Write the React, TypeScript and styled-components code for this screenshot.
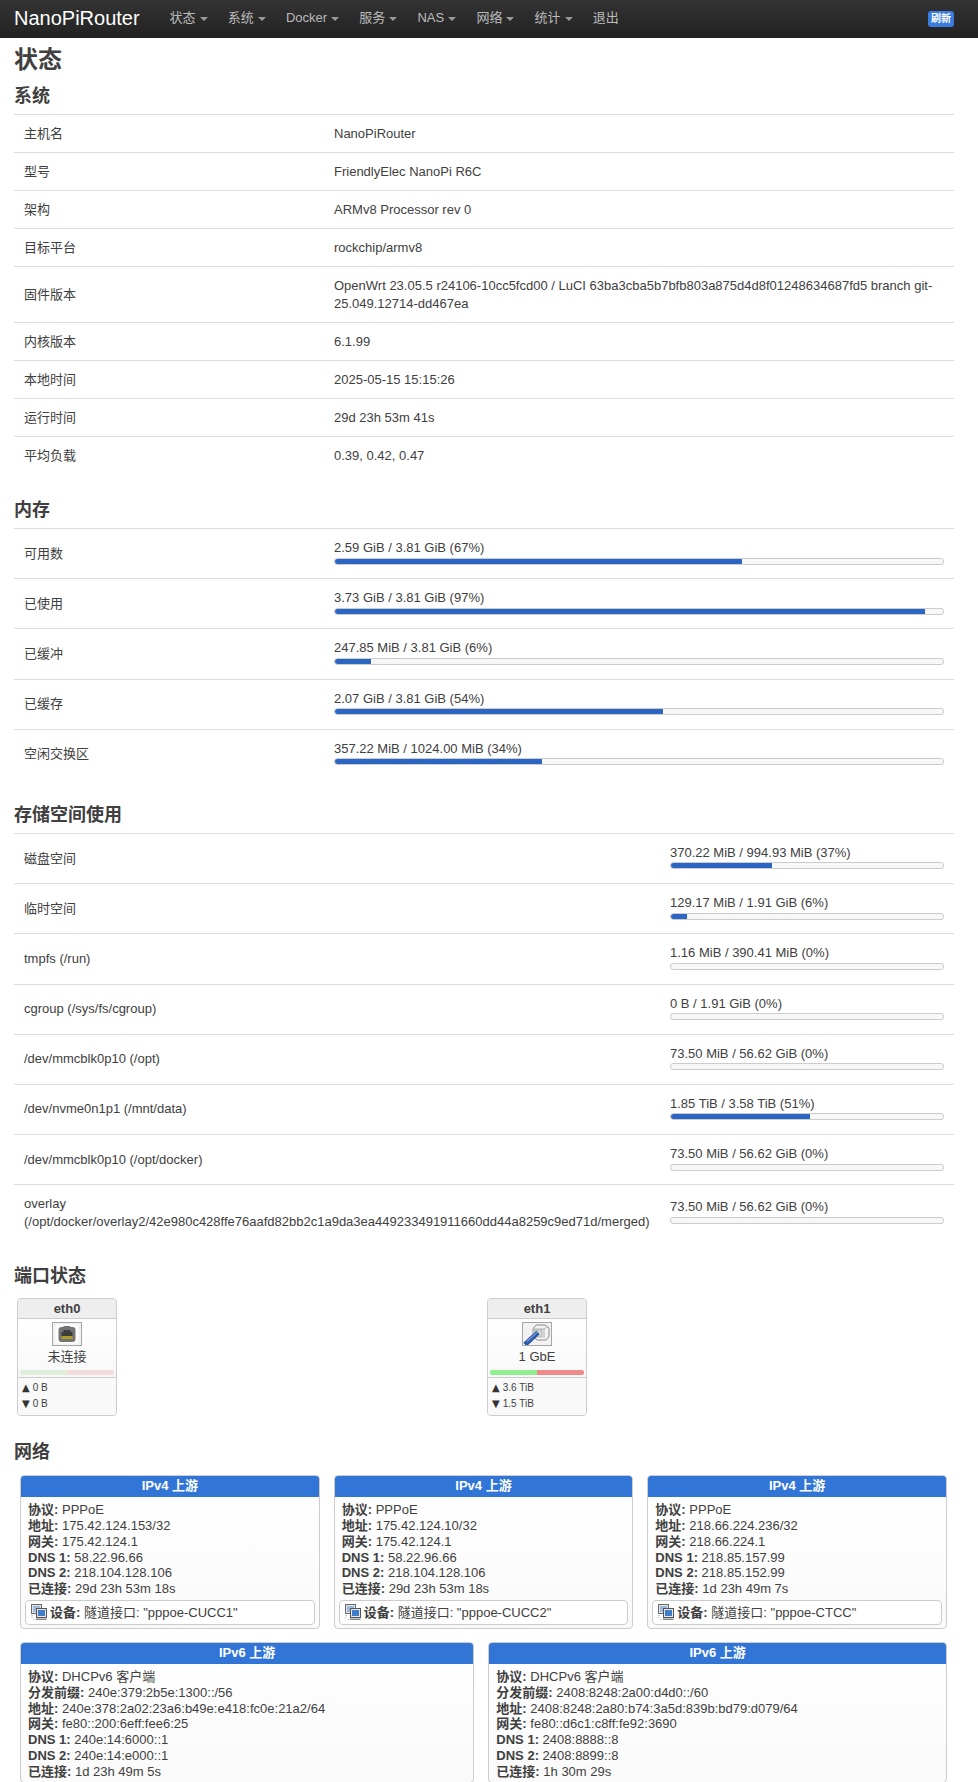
import React from 'react';
import styled, { createGlobalStyle } from 'styled-components';

const Global = createGlobalStyle`
  html, body { margin: 0; padding: 0; height: 1782px; overflow: hidden; background: #fff; }
  body { font-family: "Liberation Sans", "Noto Sans CJK SC", Arial, sans-serif; font-size: 13px; line-height: 18px; color: #404040; }
  * { box-sizing: border-box; }
`;

const NavBar = styled.header`
  height: 38px; display: flex; align-items: center; padding: 0 24px 2px 14px;
  background: linear-gradient(#333333, #222222);
`;
const Brand = styled.a`
  font-size: 20px; line-height: 32px; color: #fff; width: 155.5px; flex: none;
`;
const Menu = styled.nav`
  display: flex; flex: 1; gap: 20.2px; align-items: center;
`;
const MenuItem = styled.span`
  color: #bbb; font-size: 13px; display: inline-flex; align-items: center; gap: 4px;
`;
const Caret = styled.i`
  width: 0; height: 0; border-left: 4px solid transparent; border-right: 4px solid transparent;
  border-top: 4px solid #999; margin-top: 2px;
`;
const Badge = styled.span`
  background: #3a7dde; color: #fff; font-size: 10px; font-weight: bold; line-height: 14px;
  border-radius: 3px; padding: 1px 2px; width: 26px; text-align: center; white-space: nowrap; margin-top: 2px;
`;

const Main = styled.main`
  padding: 0 24px 0 14px;
`;
const PageTitle = styled.h1`
  font-size: 24px; line-height: 36px; margin: 4px 0 0; font-weight: bold; color: #404040;
`;
const SectionTitle = styled.h2`
  font-size: 18px; line-height: 36px; margin: 0; font-weight: bold; color: #404040;
`;
const Section = styled.section`
  margin-bottom: 18px;
`;
const Table = styled.div`
  display: flex; flex-direction: column;
`;
const Row = styled.div`
  display: flex; align-items: center; border-top: 1px solid #ddd;
`;
const Label = styled.div<{ $w: number }>`
  width: ${p => p.$w}px; flex: none; padding: 9.5px 10px;
`;
const Value = styled.div`
  flex: 1; min-width: 0; padding: 9.5px 10px;
`;
const MeterCell = styled.div`
  flex: 1; min-width: 0; padding: 10px 10px 13.7px;
`;
const MeterText = styled.div`
  line-height: 18px; height: 18px;
`;
const MeterTrack = styled.div`
  height: 7px; border: 1px solid #ccc; border-radius: 3px; background: #f7f7f7; overflow: hidden; margin-top: 0.5px;
`;
const MeterFill = styled.div`
  height: 100%; background: #2c66c3; border-radius: 2px 0 0 2px;
`;

const Ports = styled.div`
  display: grid; grid-template-columns: 470px 470px; margin-top: 4px;
`;
const PortSlot = styled.div`
  padding-left: 3px;
`;
const PortCard = styled.div`
  width: 100px; height: 118px; border: 1px solid #ccc; border-radius: 4px; background: #fff; overflow: hidden;
  display: flex; flex-direction: column;
`;
const PortName = styled.div`
  height: 20px; background: #eee; border-bottom: 1px solid #ccc; text-align: center; font-weight: bold; font-size: 13px; line-height: 19px; flex: none;
`;
const PortBody = styled.div`
  display: flex; flex-direction: column; align-items: center; height: 58px; flex: none;
  background: linear-gradient(#fff, #f8f8f8); padding-top: 3px;
`;
const PortIcon = styled.div`
  width: 30px; height: 24px; border: 1px solid #a5a5a5; background: #f2f2f2; display: flex; align-items: center; justify-content: center; flex: none;
`;
const PortState = styled.div`
  margin-top: 2px; font-size: 13px; line-height: 18px; text-align: center; height: 18px;
`;
const LinkBar = styled.div`
  display: flex; width: 94px; height: 5px; margin-top: 4px; border-radius: 2px; overflow: hidden; flex: none;
`;
const LinkSeg = styled.div<{ $c: string }>`
  flex: 1; background: ${p => p.$c};
`;
const PortStats = styled.div`
  border-top: 1px solid #ccc; background: #f9f9f9; flex: 1; padding: 2px 4px; font-size: 10px; line-height: 16px;
`;
const Arrow = styled.span`
  font-family: "DejaVu Sans", sans-serif; font-size: 10px; color: #333; margin-right: 3px;
`;

const Cards = styled.div`
  display: flex; gap: 14px; padding: 0 7px 0 6px; margin-bottom: 13.5px;
  &:first-of-type { margin-top: 5px; }
`;
const NetCard = styled.div<{ $auto?: boolean }>`
  flex: ${p => (p.$auto ? '1 1 auto' : '1 1 0')}; min-width: 0; border: 1px solid #ccc; border-radius: 4px; overflow: hidden; background: linear-gradient(#fff, #fafafa);
`;
const NetHead = styled.div`
  background: #3176d6; color: #fff; text-align: center; font-weight: bold; font-size: 13px; line-height: 20px; height: 21px;
`;
const NetBody = styled.div`
  padding: 5px 7px 2.5px;
`;
const NetLine = styled.div`
  line-height: 15.8px; font-size: 13px; white-space: nowrap;
`;
const Key = styled.strong`
  font-weight: bold;
`;
const DeviceBox = styled.div`
  display: flex; align-items: center; gap: 3px; margin: 3px -3px 0; height: 25px; border: 1px solid #ccc; border-radius: 4px; padding: 0 5px; font-size: 13px; background: #fff;
`;

const RjEmpty = () => (
  <svg width="24" height="20" viewBox="0 0 24 20">
    <rect x="0.5" y="0.5" width="23" height="19" rx="3" fill="#fff" />
    <path d="M3.5 6a3 3 0 0 1 3-3h2V2h7v1h2a3 3 0 0 1 3 3v9a3 3 0 0 1-3 3h-11a3 3 0 0 1-3-3z" fill="#747474" />
    <path d="M6.5 8h2V6h7v2h2v6h-11z" fill="#3c3c3c" />
    <rect x="6.5" y="12" width="11" height="3" fill="#c7b22c" />
    <path d="M8 12v3M10 12v3M12 12v3M14 12v3M16 12v3" stroke="#6f6a20" strokeWidth="0.6" />
  </svg>
);
const RjPlugged = () => (
  <svg width="28" height="22" viewBox="0 0 28 22">
    <path d="M10 6l3-4h9l4 3v8l-3 4H14l-3-3z" fill="#f4f4f4" stroke="#8c8c8c" />
    <path d="M13 2l-3 4h11l4-3M21 6v9" fill="none" stroke="#b0b0b0" />
    <path d="M10 7h9v7h-9z" fill="#dcdcdc" stroke="#999" strokeWidth="0.7" />
    <path d="M2 21.5L15 9.5" stroke="#2b5aa6" strokeWidth="5" />
    <path d="M4 18.5L14 9.5" stroke="#7d9ed6" strokeWidth="1.2" />
  </svg>
);
const TunnelIcon = () => (
  <svg width="16" height="17" viewBox="0 0 16 17">
    <rect x="0.5" y="0.5" width="10" height="9" fill="#e3e3e3" stroke="#6a6a6a" />
    <rect x="2" y="2" width="7" height="6" fill="#9fb9de" />
    <rect x="5.5" y="4.5" width="10" height="9" fill="#e6e6e6" stroke="#555" />
    <rect x="7" y="6" width="7" height="6" fill="#3f7cc9" />
    <path d="M5 14.5h10.5V16H5z" fill="#888" />
    <path d="M0.5 11h1v1h-1zM0.5 13h1v1h-1zM2.5 15h1v1h-1z" fill="#7aa0d8" />
  </svg>
);

const Meter = ({ text, pct }: { text: string; pct: number }) => (
  <MeterCell>
    <MeterText>{text}</MeterText>
    <MeterTrack><MeterFill style={{ width: `${pct}%` }} /></MeterTrack>
  </MeterCell>
);

const system: [string, string][] = [
  ['主机名', 'NanoPiRouter'],
  ['型号', 'FriendlyElec NanoPi R6C'],
  ['架构', 'ARMv8 Processor rev 0'],
  ['目标平台', 'rockchip/armv8'],
  ['固件版本', 'OpenWrt 23.05.5 r24106-10cc5fcd00 / LuCI 63ba3cba5b7bfb803a875d4d8f01248634687fd5 branch git-25.049.12714-dd467ea'],
  ['内核版本', '6.1.99'],
  ['本地时间', '2025-05-15 15:15:26'],
  ['运行时间', '29d 23h 53m 41s'],
  ['平均负载', '0.39, 0.42, 0.47'],
];
const memory: [string, string, number][] = [
  ['可用数', '2.59 GiB / 3.81 GiB (67%)', 67],
  ['已使用', '3.73 GiB / 3.81 GiB (97%)', 97],
  ['已缓冲', '247.85 MiB / 3.81 GiB (6%)', 6],
  ['已缓存', '2.07 GiB / 3.81 GiB (54%)', 54],
  ['空闲交换区', '357.22 MiB / 1024.00 MiB (34%)', 34],
];
const storage: [string, string, number][] = [
  ['磁盘空间', '370.22 MiB / 994.93 MiB (37%)', 37],
  ['临时空间', '129.17 MiB / 1.91 GiB (6%)', 6],
  ['tmpfs (/run)', '1.16 MiB / 390.41 MiB (0%)', 0],
  ['cgroup (/sys/fs/cgroup)', '0 B / 1.91 GiB (0%)', 0],
  ['/dev/mmcblk0p10 (/opt)', '73.50 MiB / 56.62 GiB (0%)', 0],
  ['/dev/nvme0n1p1 (/mnt/data)', '1.85 TiB / 3.58 TiB (51%)', 51],
  ['/dev/mmcblk0p10 (/opt/docker)', '73.50 MiB / 56.62 GiB (0%)', 0],
  ['overlay (/opt/docker/overlay2/42e980c428ffe76aafd82bb2c1a9da3ea449233491911660dd44a8259c9ed71d/merged)', '73.50 MiB / 56.62 GiB (0%)', 0],
];
const ipv4 = [
  { rows: [['协议', 'PPPoE'], ['地址', '175.42.124.153/32'], ['网关', '175.42.124.1'], ['DNS 1', '58.22.96.66'], ['DNS 2', '218.104.128.106'], ['已连接', '29d 23h 53m 18s']], dev: 'pppoe-CUCC1' },
  { rows: [['协议', 'PPPoE'], ['地址', '175.42.124.10/32'], ['网关', '175.42.124.1'], ['DNS 1', '58.22.96.66'], ['DNS 2', '218.104.128.106'], ['已连接', '29d 23h 53m 18s']], dev: 'pppoe-CUCC2' },
  { rows: [['协议', 'PPPoE'], ['地址', '218.66.224.236/32'], ['网关', '218.66.224.1'], ['DNS 1', '218.85.157.99'], ['DNS 2', '218.85.152.99'], ['已连接', '1d 23h 49m 7s']], dev: 'pppoe-CTCC' },
];
const ipv6 = [
  { rows: [['协议', 'DHCPv6 客户端'], ['分发前缀', '240e:379:2b5e:1300::/56'], ['地址', '240e:378:2a02:23a6:b49e:e418:fc0e:21a2/64'], ['网关', 'fe80::200:6eff:fee6:25'], ['DNS 1', '240e:14:6000::1'], ['DNS 2', '240e:14:e000::1'], ['已连接', '1d 23h 49m 5s']] },
  { rows: [['协议', 'DHCPv6 客户端'], ['分发前缀', '2408:8248:2a00:d4d0::/60'], ['地址', '2408:8248:2a80:b74:3a5d:839b:bd79:d079/64'], ['网关', 'fe80::d6c1:c8ff:fe92:3690'], ['DNS 1', '2408:8888::8'], ['DNS 2', '2408:8899::8'], ['已连接', '1h 30m 29s']] },
];
const nav = [['状态', 1], ['系统', 1], ['Docker', 1], ['服务', 1], ['NAS', 1], ['网络', 1], ['统计', 1], ['退出', 0]] as const;

const Net = ({ title, rows, dev, auto }: { title: string; rows: string[][]; dev?: string; auto?: boolean }) => (
  <NetCard $auto={auto}>
    <NetHead>{title}</NetHead>
    <NetBody>
      {rows.map(([k, v]) => <NetLine key={k}><Key>{k}:</Key> {v}</NetLine>)}
      {dev && <DeviceBox><TunnelIcon /><span><Key>设备:</Key> 隧道接口: "{dev}"</span></DeviceBox>}
    </NetBody>
  </NetCard>
);

export default function App() {
  return (
    <>
      <Global />
      <NavBar>
        <Brand>NanoPiRouter</Brand>
        <Menu>
          {nav.map(([t, c]) => <MenuItem key={t}>{t}{c ? <Caret /> : null}</MenuItem>)}
        </Menu>
        <Badge>刷新</Badge>
      </NavBar>
      <Main>
        <PageTitle>状态</PageTitle>
        <Section>
          <SectionTitle>系统</SectionTitle>
          <Table>
            {system.map(([k, v]) => <Row key={k}><Label $w={310}>{k}</Label><Value>{v}</Value></Row>)}
          </Table>
        </Section>
        <Section>
          <SectionTitle>内存</SectionTitle>
          <Table>
            {memory.map(([k, t, p]) => <Row key={k}><Label $w={310}>{k}</Label><Meter text={t} pct={p} /></Row>)}
          </Table>
        </Section>
        <Section>
          <SectionTitle>存储空间使用</SectionTitle>
          <Table>
            {storage.map(([k, t, p]) => <Row key={k}><Label $w={646}>{k}</Label><Meter text={t} pct={p} /></Row>)}
          </Table>
        </Section>
        <Section>
          <SectionTitle>端口状态</SectionTitle>
          <Ports>
            <PortSlot>
              <PortCard>
                <PortName>eth0</PortName>
                <PortBody>
                  <PortIcon><RjEmpty /></PortIcon>
                  <PortState>未连接</PortState>
                  <LinkBar><LinkSeg $c="#dfeedb" /><LinkSeg $c="#f0dcdc" /></LinkBar>
                </PortBody>
                <PortStats><div><Arrow>▲</Arrow>0 B</div><div><Arrow>▼</Arrow>0 B</div></PortStats>
              </PortCard>
            </PortSlot>
            <PortSlot>
              <PortCard>
                <PortName>eth1</PortName>
                <PortBody>
                  <PortIcon><RjPlugged /></PortIcon>
                  <PortState>1 GbE</PortState>
                  <LinkBar><LinkSeg $c="#90ee90" /><LinkSeg $c="#ee8a8a" /></LinkBar>
                </PortBody>
                <PortStats><div><Arrow>▲</Arrow>3.6 TiB</div><div><Arrow>▼</Arrow>1.5 TiB</div></PortStats>
              </PortCard>
            </PortSlot>
          </Ports>
        </Section>
        <section>
          <SectionTitle>网络</SectionTitle>
          <Cards>
            {ipv4.map((c) => <Net key={c.dev} title="IPv4 上游" rows={c.rows} dev={c.dev} />)}
          </Cards>
          <Cards>
            {ipv6.map((c, i) => <Net key={i} auto title="IPv6 上游" rows={c.rows} />)}
          </Cards>
        </section>
      </Main>
    </>
  );
}
